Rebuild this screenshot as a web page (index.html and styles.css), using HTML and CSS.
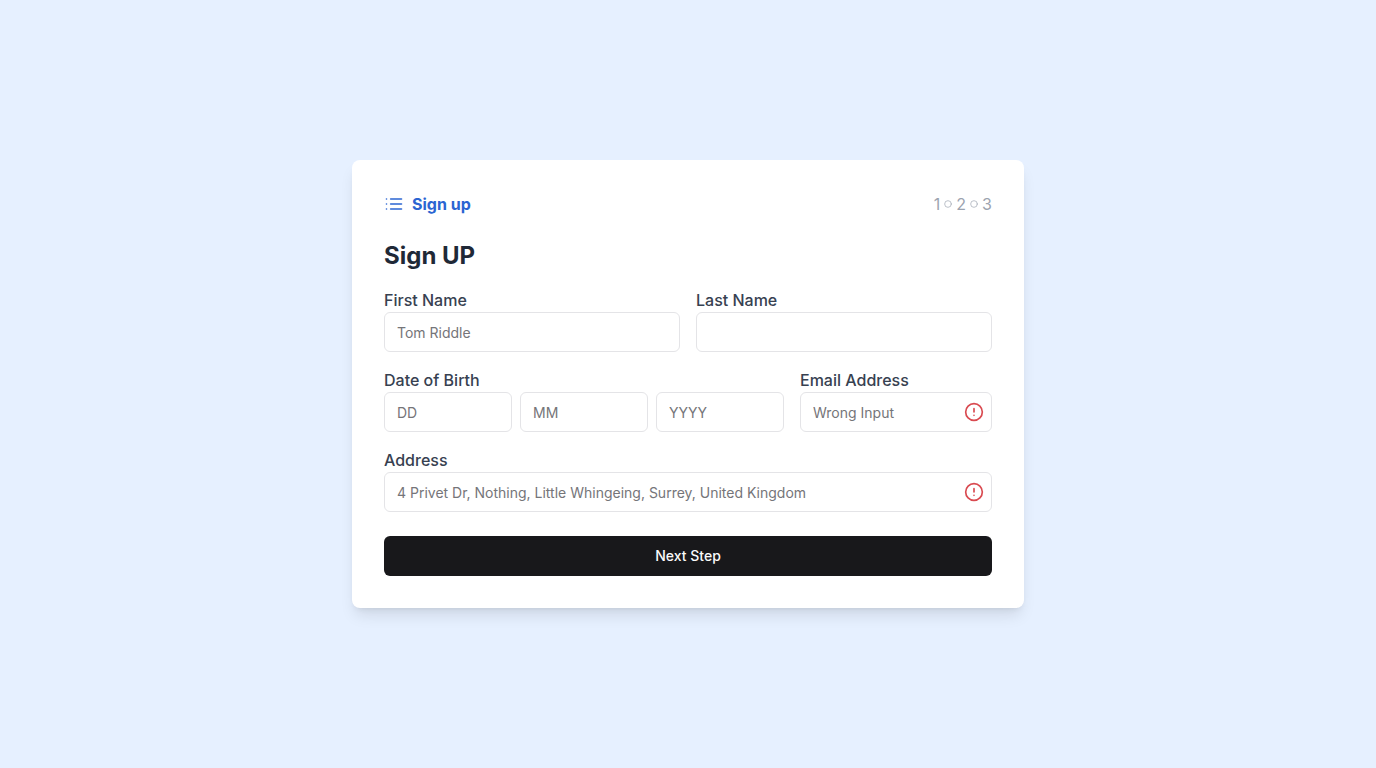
FILE: index.html
```html
<!DOCTYPE html>
<html lang="en">
<head>
<meta charset="utf-8">
<meta name="viewport" content="width=device-width, initial-scale=1">
<title>Sign up</title>
<link rel="stylesheet" href="styles.css">
</head>
<body>
<main class="card">
  <header class="card-header">
    <div class="brand">
      <svg class="icon" viewBox="0 0 24 24" aria-hidden="true"><path d="M8 6h13M8 12h13M8 18h13M3 6h.01M3 12h.01M3 18h.01"/></svg>
      <span class="brand-name">Sign up</span>
    </div>
    <div class="steps">
      <span>1</span>
      <svg class="icon dot" viewBox="0 0 24 24" aria-hidden="true"><circle cx="12" cy="12" r="10"/></svg>
      <span>2</span>
      <svg class="icon dot" viewBox="0 0 24 24" aria-hidden="true"><circle cx="12" cy="12" r="10"/></svg>
      <span>3</span>
    </div>
  </header>
  <form class="form">
    <h1 class="title">Sign UP</h1>
    <div class="row row-half">
      <div class="field">
        <label class="label" for="first-name">First Name</label>
        <input class="input" id="first-name" type="text" placeholder="Tom Riddle">
      </div>
      <div class="field">
        <label class="label" for="last-name">Last Name</label>
        <input class="input" id="last-name" type="text">
      </div>
    </div>
    <div class="row row-birth">
      <div class="field">
        <label class="label" for="day">Date of Birth</label>
        <div class="date">
          <input class="input" id="day" type="text" placeholder="DD" aria-label="Day of birth">
          <input class="input" id="month" type="text" placeholder="MM" aria-label="Month of birth">
          <input class="input" id="year" type="text" placeholder="YYYY" aria-label="Year of birth">
        </div>
      </div>
      <div class="field">
        <label class="label" for="email">Email Address</label>
        <div class="control">
          <input class="input" id="email" type="email" placeholder="Wrong Input">
          <svg class="icon alert" viewBox="0 0 24 24" aria-hidden="true"><circle cx="12" cy="12" r="10"/><path d="M12 8v4M12 16h.01"/></svg>
        </div>
      </div>
    </div>
    <div class="field">
      <label class="label" for="address">Address</label>
      <div class="control">
        <input class="input" id="address" type="text" placeholder="4 Privet Dr, Nothing, Little Whingeing, Surrey, United Kingdom">
        <svg class="icon alert" viewBox="0 0 24 24" aria-hidden="true"><circle cx="12" cy="12" r="10"/><path d="M12 8v4M12 16h.01"/></svg>
      </div>
    </div>
    <button class="button" type="submit">Next Step</button>
  </form>
</main>
</body>
</html>
```
FILE: styles.css
```css
*, *::before, *::after {
  box-sizing: border-box;
}

body {
  margin: 0;
  min-height: 100vh;
  display: flex;
  align-items: center;
  justify-content: center;
  background: #e6f0ff;
  color: #1f2937;
  font-family: Inter, "Liberation Sans", sans-serif;
  font-size: 16px;
  line-height: 24px;
}

.card {
  width: 100%;
  max-width: 672px;
  padding: 32px;
  border-radius: 8px;
  background: #fff;
  box-shadow: 0 10px 15px -3px rgb(0 0 0 / 10%), 0 4px 6px -4px rgb(0 0 0 / 10%);
}

.card-header {
  display: flex;
  align-items: center;
  justify-content: space-between;
  margin-bottom: 24px;
}

.brand {
  display: flex;
  align-items: center;
  gap: 8px;
  color: #2b65d2;
}

.brand-name {
  font-weight: 700;
}

.icon {
  width: 20px;
  height: 20px;
  fill: none;
  stroke: currentColor;
  stroke-width: 2;
  stroke-linecap: round;
  stroke-linejoin: round;
}

.steps {
  display: flex;
  align-items: center;
  gap: 4px;
  color: #9ca3af;
}

.dot {
  width: 8px;
  height: 8px;
}

.title {
  margin: 0 0 16px;
  font-size: 24px;
  font-weight: 700;
  line-height: 32px;
}

.row {
  display: grid;
  gap: 16px;
  margin-bottom: 16px;
}

.row-half {
  grid-template-columns: 1fr 1fr;
}

.row-birth {
  grid-template-columns: 1fr 192px;
}

.label {
  display: block;
  color: #374151;
  font-weight: 500;
}

.input {
  display: block;
  width: 100%;
  min-width: 0;
  height: 40px;
  padding: 8px 12px;
  border: 1px solid #e4e4e7;
  border-radius: 6px;
  background: #fff;
  color: #18181b;
  font: inherit;
  font-size: 14px;
  line-height: 20px;
}

.input::placeholder {
  color: #757579;
}

.date {
  display: flex;
  gap: 8px;
}

.control {
  position: relative;
}

.alert {
  position: absolute;
  top: 10px;
  right: 8px;
  color: #d94a50;
}

.button {
  display: block;
  width: 100%;
  height: 40px;
  margin-top: 24px;
  border: 0;
  border-radius: 6px;
  background: #18181b;
  color: #fafafa;
  font: inherit;
  font-size: 14px;
  font-weight: 500;
  line-height: 20px;
  cursor: pointer;
}
```
